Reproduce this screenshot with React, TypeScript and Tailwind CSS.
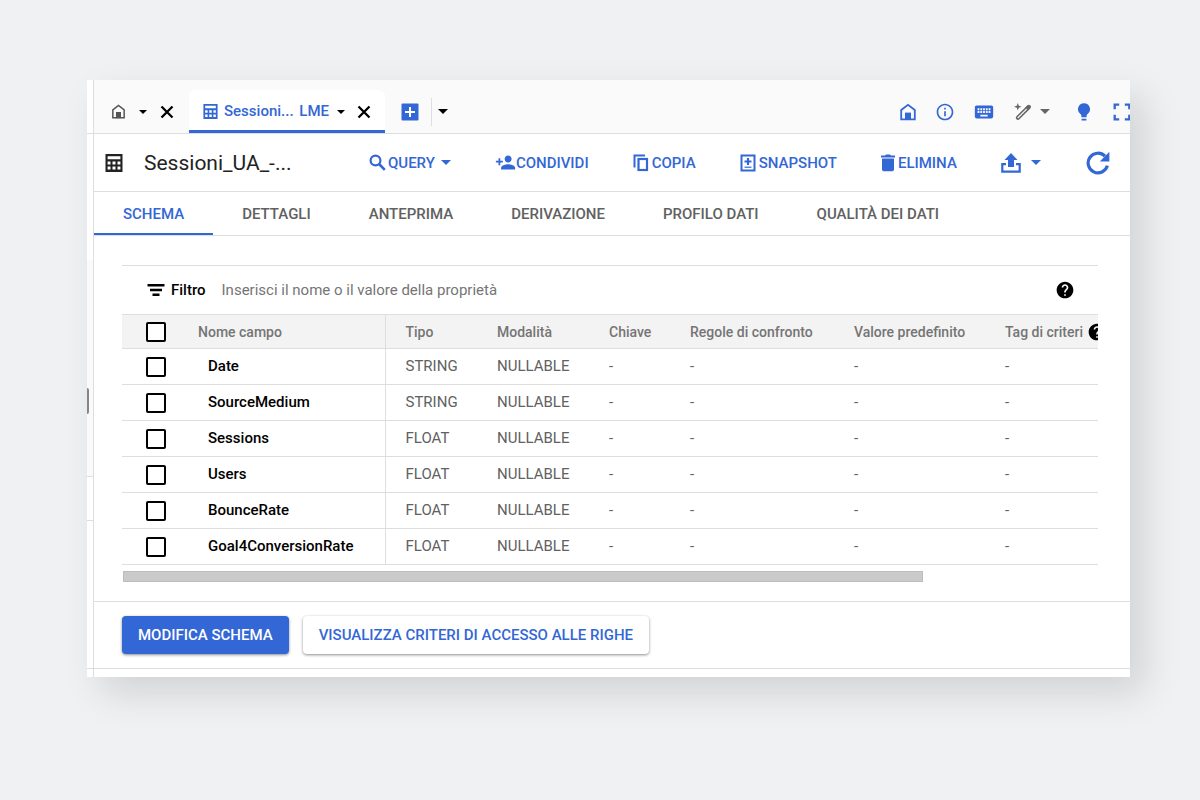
import { useState } from "react";
import type { ReactNode } from "react";
import { MdHelp, MdInfoOutline, MdKeyboard, MdPersonAdd } from "react-icons/md";

type Field = {
  name: string;
  type: string;
};

const fields: Field[] = [
  { name: "Date", type: "STRING" },
  { name: "SourceMedium", type: "STRING" },
  { name: "Sessions", type: "FLOAT" },
  { name: "Users", type: "FLOAT" },
  { name: "BounceRate", type: "FLOAT" },
  { name: "Goal4ConversionRate", type: "FLOAT" },
];

const tabs = [
  "SCHEMA",
  "DETTAGLI",
  "ANTEPRIMA",
  "DERIVAZIONE",
  "PROFILO DATI",
  "QUALITÀ DEI DATI",
];

type IconProps = { className?: string };

const HomeIcon = ({ className }: IconProps) => (
  <svg viewBox="0 0 18 18" className={className} aria-hidden="true">
    <path
      d="M2.2 7 9 1.8 15.8 7v9.4H2.2z"
      fill="none"
      stroke="currentColor"
      strokeWidth="1.8"
    />
    <path d="M6 9.6h6V17H6z" fill="currentColor" />
  </svg>
);

const TableIcon = ({ className }: IconProps) => (
  <svg viewBox="0 0 18 18" className={className} aria-hidden="true">
    <path
      fillRule="evenodd"
      fill="currentColor"
      d="M.5 0h17v18H.5zM2.600 2.200v3h12.800v-3zM2.600 7.400v3h2.900v-3zM7.500 7.400v3h3v-3zM12.500 7.400v3h2.900v-3zM2.600 12.600v3h2.900v-3zM7.500 12.600v3h3v-3zM12.500 12.600v3h2.900v-3z"
    />
  </svg>
);

const Caret = ({ className }: IconProps) => (
  <svg viewBox="0 0 10 5" className={className} aria-hidden="true">
    <path d="M0 0h10L5 5z" fill="currentColor" />
  </svg>
);

const CloseIcon = ({ className }: IconProps) => (
  <svg viewBox="0 0 14 14" className={className} aria-hidden="true">
    <path d="M1.500 1.500l11 11M12.500 1.500l-11 11" stroke="currentColor" strokeWidth="2.300" />
  </svg>
);

const AddIcon = ({ className }: IconProps) => (
  <svg viewBox="0 0 18 18" className={className} aria-hidden="true">
    <rect x=".5" y=".5" width="17" height="17" rx="1" fill="currentColor" />
    <path d="M9 4v10M4 9h10" stroke="#fff" strokeWidth="2" />
  </svg>
);

const WandIcon = ({ className }: IconProps) => (
  <svg viewBox="0 0 18 18" className={className} aria-hidden="true">
    <path
      d="M3 13.800 13.600 3.200a1.300 1.300 0 0 1 1.900 0 1.300 1.300 0 0 1 0 1.900L4.900 15.700a1.300 1.300 0 0 1-1.900 0 1.300 1.300 0 0 1 0-1.900z"
      fill="none"
      stroke="currentColor"
      strokeWidth="1.600"
    />
    <path d="M11.200 4.600l2.400-2.400q1.200-1 2.600.2 1.200 1.400.2 2.600L14 7.400z" fill="currentColor" />
    <path d="M3.800 0l1 2.800 2.800 1-2.800 1-1 2.800-1-2.800-2.800-1 2.800-1z" fill="currentColor" />
  </svg>
);

const BulbIcon = ({ className }: IconProps) => (
  <svg viewBox="0 0 14 18" className={className} aria-hidden="true">
    <path
      d="M7 .2a6 6 0 0 0-3.600 10.800c.8.7 1 1.400 1 2.400v.8h5.200v-.8c0-1 .2-1.700 1-2.400A6 6 0 0 0 7 .2zM4.600 15.800h4.800v1.600H4.600z"
      fill="currentColor"
    />
  </svg>
);

const FullscreenIcon = ({ className }: IconProps) => (
  <svg viewBox="0 0 18 18" className={className} aria-hidden="true">
    <path
      d="M1.700 6.200V1.700h4.500M11.800 1.700h4.500v4.500M16.300 11.800v4.500h-4.500M6.200 16.300H1.700v-4.500"
      fill="none"
      stroke="currentColor"
      strokeWidth="2.300"
    />
  </svg>
);

const SearchIcon = ({ className }: IconProps) => (
  <svg viewBox="0 0 17 17" className={className} aria-hidden="true">
    <circle cx="6.500" cy="6.500" r="4.900" fill="none" stroke="currentColor" strokeWidth="2.200" />
    <path d="M10 10l5.800 5.800" stroke="currentColor" strokeWidth="2.600" />
  </svg>
);

const CopyIcon = ({ className }: IconProps) => (
  <svg viewBox="0 0 16 18" className={className} aria-hidden="true">
    <path d="M1.500 13.500v-12h10.500" fill="none" stroke="currentColor" strokeWidth="2" />
    <rect x="5.500" y="5" width="8.500" height="11" fill="none" stroke="currentColor" strokeWidth="2.200" />
  </svg>
);

const SnapshotIcon = ({ className }: IconProps) => (
  <svg viewBox="0 0 16 18" className={className} aria-hidden="true">
    <rect
      x="1.500"
      y="1.500"
      width="13"
      height="15"
      fill="none"
      stroke="currentColor"
      strokeWidth="2"
    />
    <path d="M8 4v7M4.500 7.500h7" stroke="currentColor" strokeWidth="2.200" />
    <path d="M4.500 13.200h7" stroke="currentColor" strokeWidth="1.200" />
  </svg>
);

const DeleteIcon = ({ className }: IconProps) => (
  <svg viewBox="0 0 14 18" className={className} aria-hidden="true">
    <path
      d="M0 1.600h4L5 .6h4l1 1h4v2H0zM1 4.600h12v10.800a1.800 1.800 0 0 1-1.800 1.800H2.800A1.800 1.800 0 0 1 1 15.400z"
      fill="currentColor"
    />
  </svg>
);

const ExportIcon = ({ className }: IconProps) => (
  <svg viewBox="0 0 20 20" className={className} aria-hidden="true">
    <path d="M10 0l6.500 7H13v7H7V7H3.500z" fill="currentColor" />
    <path
      d="M5 11.200H1.300v7.500h17.400v-7.500H15"
      fill="none"
      stroke="currentColor"
      strokeWidth="2.200"
    />
  </svg>
);

const RefreshIcon = ({ className }: IconProps) => (
  <svg viewBox="0 0 24 24" className={className} aria-hidden="true">
    <path
      d="M21.400 14.600A9.800 9.800 0 1 1 19 5.200"
      fill="none"
      stroke="currentColor"
      strokeWidth="3.200"
    />
    <path d="M23.400.8v9.600h-9.600z" fill="currentColor" />
  </svg>
);

const FilterIcon = ({ className }: IconProps) => (
  <svg viewBox="0 0 18 14" className={className} aria-hidden="true">
    <path d="M.5 2.200h17M3 7h12M5.500 11.800h7" stroke="currentColor" strokeWidth="2.400" />
  </svg>
);

const ToolButton = ({ icon, label }: { icon: ReactNode; label: string }) => (
  <button className="flex items-center whitespace-nowrap text-[15px] font-medium text-[#3367d6]">
    {icon}
    <span className="pt-0.5">{label}</span>
  </button>
);

const CheckBox = ({ label }: { label: string }) => (
  <input
    type="checkbox"
    aria-label={label}
    className="block size-5 appearance-none rounded-xs border-2 border-black bg-white checked:bg-[#3367d6]"
  />
);

const TabStrip = () => (
  <div className="flex h-[54px] items-end border-b border-[#dedede] bg-[#fafafa]">
    <div className="flex h-[43px] items-center pl-[17px]">
      <button aria-label="Home" className="text-[#555]">
        <HomeIcon className="size-[15px]" />
      </button>
      <button aria-label="Menu home" className="ml-3 p-px">
        <Caret className="h-1 w-2" />
      </button>
      <button aria-label="Chiudi home" className="ml-3">
        <CloseIcon className="size-[14px]" />
      </button>
    </div>

    <div className="ml-[15px] flex h-[43px] items-center rounded-t-md border-b-3 border-[#3367d6] bg-white px-3.5 pt-[3px] text-[15px] font-medium text-[#3367d6]">
      <TableIcon className="size-[15px]" />
      <a href="#sessioni" className="ml-1.5 whitespace-nowrap">
        Sessioni... <span className="ml-0.5">LME</span>
      </a>
      <button aria-label="Menu scheda" className="ml-2 text-black">
        <Caret className="h-1 w-2" />
      </button>
      <button aria-label="Chiudi scheda" className="ml-3 text-black">
        <CloseIcon className="size-[14px]" />
      </button>
    </div>

    <div className="ml-4 flex h-[43px] items-center">
      <button aria-label="Nuova query" className="text-[#3367d6]">
        <AddIcon className="size-[18px]" />
      </button>
      <div className="ml-3 h-7 w-px bg-[#dedede]"></div>
      <button aria-label="Altre schede" className="ml-1.5">
        <Caret className="h-[5px] w-2.5" />
      </button>
    </div>

    {/* Right actions, the last one runs off the edge */}
    <div className="-mr-px ml-auto flex h-[43px] shrink-0 items-center text-[#3367d6]">
      <button aria-label="Pagina iniziale">
        <HomeIcon className="size-[18px]" />
      </button>
      <button aria-label="Informazioni" className="ml-[18px]">
        <MdInfoOutline className="size-5" />
      </button>
      <button aria-label="Scorciatoie" className="ml-[18px]">
        <MdKeyboard className="size-[22px]" />
      </button>
      <button aria-label="Assistente" className="ml-[19px] flex items-center gap-2 text-[#666]">
        <WandIcon className="size-[18px]" />
        <Caret className="h-[5px] w-2.5" />
      </button>
      <button aria-label="Suggerimenti" className="ml-[27px]">
        <BulbIcon className="h-[18px] w-3.5" />
      </button>
      <button aria-label="Schermo intero" className="ml-[22px]">
        <FullscreenIcon className="size-[18px]" />
      </button>
    </div>
  </div>
);

const Toolbar = () => (
  <div className="flex h-[58px] items-center border-b border-[#dedede] pl-[11px] pr-5">
    <TableIcon className="size-[18px] shrink-0 text-[#222]" />
    <h1 className="ml-[21px] w-[225px] shrink-0 text-[21px] leading-7 text-[#222]">
      Sessioni_UA_-...
    </h1>
    <div className="flex items-center gap-11">
      <button className="flex items-center text-[15px] font-medium text-[#3367d6]">
        <SearchIcon className="mr-0.5 size-[17px]" />
        <span className="pt-0.5">QUERY</span>
        <Caret className="ml-1.5 h-[5px] w-2.5" />
      </button>
      <ToolButton icon={<MdPersonAdd className="size-[21px]" />} label="CONDIVIDI" />
      <ToolButton icon={<CopyIcon className="mr-[3px] h-[18px] w-4" />} label="COPIA" />
      <ToolButton icon={<SnapshotIcon className="mr-[3px] h-[18px] w-4" />} label="SNAPSHOT" />
      <ToolButton icon={<DeleteIcon className="mr-[3px] h-[18px] w-3.5" />} label="ELIMINA" />
      <button aria-label="Esporta" className="flex items-center gap-2.5 text-[#3367d6]">
        <ExportIcon className="size-5" />
        <Caret className="h-[5px] w-2.5" />
      </button>
    </div>
    <button aria-label="Aggiorna" className="ml-auto text-[#3367d6]">
      <RefreshIcon className="size-6" />
    </button>
  </div>
);

const SchemaTable = () => (
  <table className="w-[1190px] table-fixed border-collapse text-left">
    <colgroup>
      <col className="w-[66px]" />
      <col className="w-[197px]" />
      <col className="w-[92px]" />
      <col className="w-[112px]" />
      <col className="w-[81px]" />
      <col className="w-[164px]" />
      <col className="w-[151px]" />
      <col />
    </colgroup>
    <thead>
      <tr className="h-[34px] border-y border-[#dedede] bg-[#f3f3f3] text-sm text-[#757575]">
        <th className="pl-6">
          <CheckBox label="Seleziona tutti" />
        </th>
        <th className="border-r border-[#dedede] pl-2.5 font-medium">Nome campo</th>
        <th className="pl-5 font-medium">Tipo</th>
        <th className="pl-5 font-medium">Modalità</th>
        <th className="pl-5 font-medium">Chiave</th>
        <th className="pl-5 font-medium">Regole di confronto</th>
        <th className="pl-5 font-medium">Valore predefinito</th>
        <th className="pl-5 font-medium">
          <div className="flex items-center gap-1">
            Tag di criteri
            <MdHelp className="size-5 text-black" />
          </div>
        </th>
      </tr>
    </thead>
    <tbody>
      {fields.map((field) => (
        <tr key={field.name} className="h-9 border-b border-[#dedede] text-[15px] text-[#616161]">
          <td className="pl-6">
            <CheckBox label={field.name} />
          </td>
          <td className="border-r border-[#dedede] pl-5 font-medium text-black">{field.name}</td>
          <td className="pl-5">{field.type}</td>
          <td className="pl-5">NULLABLE</td>
          <td className="pl-5">-</td>
          <td className="pl-5">-</td>
          <td className="pl-5">-</td>
          <td className="pl-5">-</td>
        </tr>
      ))}
    </tbody>
  </table>
);

const App = () => {
  const [activeTab, setActiveTab] = useState("SCHEMA");

  return (
    <div className="min-h-screen bg-[#f0f1f3] pb-[124px] pl-[87px] pr-[70px] pt-20 font-[Roboto,sans-serif] text-black">
      <div className="flex overflow-hidden bg-white shadow-[14px_16px_36px_rgba(0,0,0,0.13)]">
        {/* Edge of the collapsed explorer panel */}
        <div className="flex w-[7px] shrink-0 flex-col border-r border-[#dedede] bg-white">
          <div className="h-[54px] border-b border-[#dedede]"></div>
          <div className="h-[126px]"></div>
          <div className="flex h-[217px] flex-col justify-end border-b border-[#dedede] bg-[#fafafa] pb-[62px]">
            <div className="h-[26px] w-0.5 rounded-r-sm bg-[#80868b]"></div>
          </div>
          <div className="h-11 border-b border-[#dedede]"></div>
          <div className="flex-1"></div>
          <div className="h-[9px] border-t border-[#dedede]"></div>
        </div>

        <main className="min-w-0 flex-1">
          <TabStrip />
          <Toolbar />

          <nav className="flex h-11 border-b border-[#dedede]">
            {tabs.map((tab) => (
              <button
                key={tab}
                onClick={() => setActiveTab(tab)}
                className={`whitespace-nowrap border-b-2 px-[29px] pt-[3px] text-[15px] font-medium ${
                  tab === activeTab
                    ? "border-[#3367d6] text-[#3367d6]"
                    : "border-transparent text-[#616161]"
                }`}
              >
                {tab}
              </button>
            ))}
          </nav>

          <section className="pb-[19px] pl-7 pr-8 pt-[29px]">
            <div className="flex h-[49px] items-center border-t border-[#dedede] pl-[25px] pr-[23px]">
              <FilterIcon className="h-3.5 w-[18px]" />
              <label htmlFor="filtro" className="ml-1.5 text-[15px] font-medium">
                Filtro
              </label>
              <input
                id="filtro"
                type="text"
                placeholder="Inserisci il nome o il valore della proprietà"
                className="ml-4 flex-1 text-[15px] outline-none placeholder:text-[#757575]"
              />
              <button aria-label="Guida">
                <MdHelp className="size-5" />
              </button>
            </div>
            <div className="overflow-hidden">
              <SchemaTable />
            </div>
            <div className="ml-px mt-1.5 h-[11px] w-[82%] border border-[#bdbdbd] bg-[#cacaca]"></div>
          </section>

          <footer className="flex h-[67px] items-center gap-3.5 border-t border-[#dedede] pl-7">
            <button className="h-[38px] rounded bg-[#3367d6] px-4 text-[15px] font-medium text-white shadow-[0_1px_3px_rgba(0,0,0,0.45)]">
              MODIFICA SCHEMA
            </button>
            <button className="h-[38px] rounded bg-white px-4 text-[15px] font-medium text-[#3367d6] shadow-[0_1px_3px_rgba(0,0,0,0.45)]">
              VISUALIZZA CRITERI DI ACCESSO ALLE RIGHE
            </button>
          </footer>
          <div className="h-[9px] border-t border-[#dedede]"></div>
        </main>
      </div>
    </div>
  );
};

export default App;
